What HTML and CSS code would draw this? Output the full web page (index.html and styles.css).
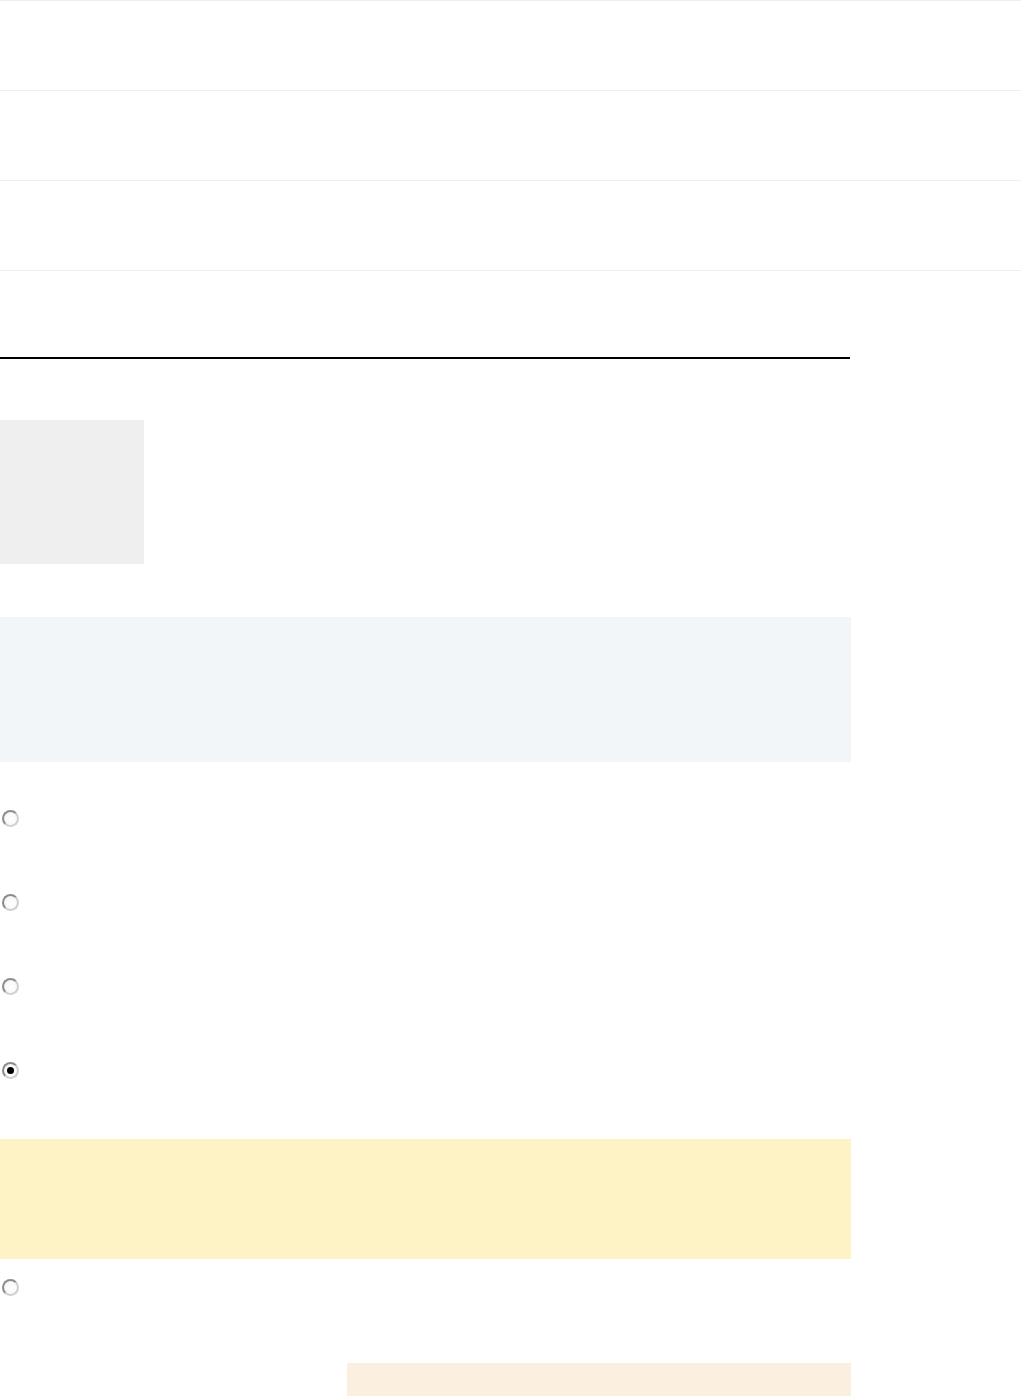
FILE: index.html
```html
<!DOCTYPE html>
<html lang="en">
<head>
<meta charset="utf-8">
<title>Page</title>
<link rel="stylesheet" href="styles.css">
</head>
<body>
<div class="rows">
  <div class="row"></div>
  <div class="row"></div>
  <div class="row"></div>
</div>
<div class="main">
  <div class="rule"></div>
  <div class="thumb"></div>
  <div class="panel-blue"></div>
  <div class="options">
    <span class="radio"></span>
    <span class="radio"></span>
    <span class="radio"></span>
    <span class="radio checked"></span>
  </div>
  <div class="panel-yellow"></div>
  <div class="options single">
    <span class="radio"></span>
  </div>
  <div class="panel-peach"></div>
</div>
</body>
</html>
```
FILE: styles.css
```css
html, body {
  margin: 0;
  padding: 0;
  background: #ffffff;
  font-family: "Liberation Sans", Arial, sans-serif;
}
.rows {
  border-bottom: 1px solid #eef0f0;
}
.row {
  height: 89px;
  border-top: 1px solid #eef0f0;
}
.main {
  width: 851px;
  display: flex;
  flex-direction: column;
}
.rule {
  margin-top: 86px;
  width: 850px;
  height: 2px;
  background: #000000;
}
.thumb {
  margin-top: 61px;
  width: 144px;
  height: 144px;
  background: #efefef;
}
.panel-blue {
  margin-top: 53px;
  height: 145px;
  background: #f2f6f9;
}
.options {
  margin-top: 48px;
  display: flex;
  flex-direction: column;
  gap: 67px;
  padding-left: 2px;
}
.options.single {
  margin-top: 20px;
}
.radio {
  box-sizing: border-box;
  width: 17px;
  height: 17px;
  border-radius: 50%;
  border: 2px solid #8c8c8c;
  border-right-color: #cfcfcf;
  border-bottom-color: #cfcfcf;
  background: radial-gradient(circle at 60% 60%, #ffffff 0%, #f4f4f4 100%);
  display: flex;
  align-items: center;
  justify-content: center;
}
.radio.checked::after {
  content: "";
  width: 7px;
  height: 7px;
  border-radius: 50%;
  background: #000000;
}
.panel-yellow {
  margin-top: 60px;
  height: 120px;
  background: #fef3c4;
}
.panel-peach {
  margin-top: 67px;
  margin-left: 347px;
  width: 504px;
  height: 60px;
  background: #fbefdf;
}
```
